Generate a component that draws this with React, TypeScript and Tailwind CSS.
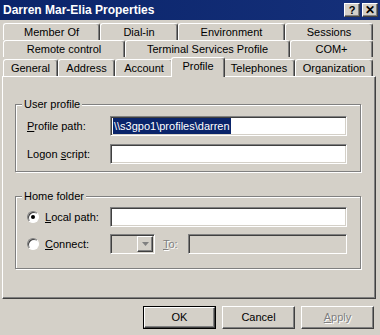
import React from 'react';

const raised =
  'border border-t-white border-l-white border-r-[#404040] border-b-[#404040] shadow-[inset_-1px_-1px_0_#808080]';
const sunken =
  'border border-t-[#808080] border-l-[#808080] border-r-white border-b-white shadow-[inset_1px_1px_0_#404040,inset_-1px_-1px_0_#d4d0c8]';

type Tab = { label: string; w: number; active?: boolean };

const rows: Tab[][] = [
  [
    { label: 'Member Of', w: 97 },
    { label: 'Dial-in', w: 78 },
    { label: 'Environment', w: 107 },
    { label: 'Sessions', w: 88 },
  ],
  [
    { label: 'Remote control', w: 122 },
    { label: 'Terminal Services Profile', w: 165 },
    { label: 'COM+', w: 83 },
  ],
  [
    { label: 'General', w: 55 },
    { label: 'Address', w: 57 },
    { label: 'Account', w: 58 },
    { label: 'Profile', w: 50, active: true },
    { label: 'Telephones', w: 72 },
    { label: 'Organization', w: 78 },
  ],
];

function TabButton({ tab }: { tab: Tab }) {
  if (tab.active) {
    return (
      <div
        style={{ width: tab.w + 4 }}
        className="relative z-10 -mx-[2px] -mb-[1px] flex h-[20px] items-center justify-center rounded-t-[3px] border-l border-t border-r border-t-white border-l-white border-r-[#404040] bg-[#d4d0c8] pb-[2px] shadow-[inset_-1px_0_0_#808080]"
      >
        {tab.label}
      </div>
    );
  }
  return (
    <div
      style={{ width: tab.w }}
      className="flex h-[17px] items-center justify-center rounded-t-[3px] border-l border-t border-r border-t-white border-l-white border-r-[#404040] shadow-[inset_-1px_0_0_#808080]"
    >
      {tab.label}
    </div>
  );
}

function U({ children }: { children: React.ReactNode }) {
  return <span className="underline underline-offset-[1px]">{children}</span>;
}

function Field({ className = '', children }: { className?: string; children?: React.ReactNode }) {
  return <div className={`h-[20px] bg-white ${sunken} ${className}`}>{children}</div>;
}

function Radio({ checked }: { checked?: boolean }) {
  return (
    <div className="flex h-[12px] w-[12px] items-center justify-center rounded-full border border-t-[#808080] border-l-[#808080] border-r-white border-b-white bg-white shadow-[inset_1px_1px_0_#404040]">
      {checked && <div className="h-[4px] w-[4px] rounded-full bg-black" />}
    </div>
  );
}

function Btn({ children, isDefault, disabled }: { children: React.ReactNode; isDefault?: boolean; disabled?: boolean }) {
  const inner = (
    <div
      className={`flex h-full w-full items-center justify-center ${raised} ${
        disabled ? 'text-[#808080] [text-shadow:1px_1px_0_white]' : ''
      }`}
    >
      {children}
    </div>
  );
  if (isDefault) {
    return <div className="h-[23px] w-[73px] border border-black">{inner}</div>;
  }
  return <div className="h-[23px] w-[73px]">{inner}</div>;
}

export default function App() {
  return (
    <div className="h-[335px] w-[380px] overflow-hidden bg-[#d4d0c8] font-['Liberation_Sans',Arial,sans-serif] text-[11px] text-black">
      {/* title bar */}
      <div className="flex h-[20px] items-center justify-between bg-gradient-to-r from-[#0a246a] to-[#15307a] pl-[3px] pr-[2px]">
        <span className="text-[12px] font-bold text-white">Darren Mar-Elia Properties</span>
        <div className="flex gap-[2px]">
          <div className={`flex h-[14px] w-[16px] items-center justify-center bg-[#d4d0c8] text-[11px] font-bold leading-none ${raised}`}>?</div>
          <div className={`flex h-[14px] w-[16px] items-center justify-center bg-[#d4d0c8] text-[12px] font-bold leading-none ${raised}`}>✕</div>
        </div>
      </div>

      {/* tabs */}
      <div className="mt-[3px] flex flex-col px-[3px]">
        {rows.map((row, i) => (
          <div key={i} className="flex items-end">
            {row.map((t) => (
              <TabButton key={t.label} tab={t} />
            ))}
          </div>
        ))}
      </div>

      {/* page */}
      <div className="mx-[2px] h-[223px] w-[374px] border border-t-white border-l-white border-r-[#404040] border-b-[#404040] px-[12px] pt-[21px] shadow-[inset_-1px_-1px_0_#808080]">
        <fieldset className="w-[346px] border border-[#808080] pb-[7px] pl-[11px] shadow-[inset_1px_1px_0_white,1px_1px_0_white]">
          <legend className="-ml-[5px] bg-[#d4d0c8] px-[2px] leading-[13px]">User profile</legend>
          <div className="mt-[5px] flex items-center">
            <span className="w-[83px]">
              <U>P</U>rofile path:
            </span>
            <Field className="flex w-[237px] items-center pl-[2px]">
              <span className="bg-[#0a246a] px-[1px] text-white">\\s3gpo1\profiles\darren</span>
            </Field>
          </div>
          <div className="mt-[8px] flex items-center">
            <span className="w-[83px]">
              Logon <U>s</U>cript:
            </span>
            <Field className="w-[237px]" />
          </div>
        </fieldset>

        <fieldset className="mt-[18px] w-[346px] border border-[#808080] pb-[14px] pl-[11px] shadow-[inset_1px_1px_0_white,1px_1px_0_white]">
          <legend className="-ml-[5px] bg-[#d4d0c8] px-[2px] leading-[13px]">Home folder</legend>
          <div className="mt-[4px] flex items-center">
            <div className="flex w-[83px] items-center gap-[6px]">
              <Radio checked />
              <span>
                <U>L</U>ocal path:
              </span>
            </div>
            <Field className="w-[237px]" />
          </div>
          <div className="mt-[7px] flex items-center">
            <div className="flex w-[83px] items-center gap-[6px]">
              <Radio />
              <span>
                <U>C</U>onnect:
              </span>
            </div>
            <div className={`flex h-[20px] w-[45px] justify-end bg-[#d4d0c8] p-[1px] ${sunken}`}>
              <div className={`flex h-full w-[16px] items-center justify-center ${raised}`}>
                <svg width="7" height="4" viewBox="0 0 7 4">
                  <path d="M0 0h7L3.5 4z" fill="#808080" />
                </svg>
              </div>
            </div>
            <span className="ml-[8px] w-[25px] text-[#808080] [text-shadow:1px_1px_0_white]">
              <U>T</U>o:
            </span>
            <div className={`h-[20px] w-[159px] bg-[#d4d0c8] ${sunken}`} />
          </div>
        </fieldset>
      </div>

      {/* buttons */}
      <div className="mt-[7px] flex justify-end gap-[6px] pr-[6px]">
        <Btn isDefault>OK</Btn>
        <Btn>Cancel</Btn>
        <Btn disabled>
          <span>
            <U>A</U>pply
          </span>
        </Btn>
      </div>
    </div>
  );
}
